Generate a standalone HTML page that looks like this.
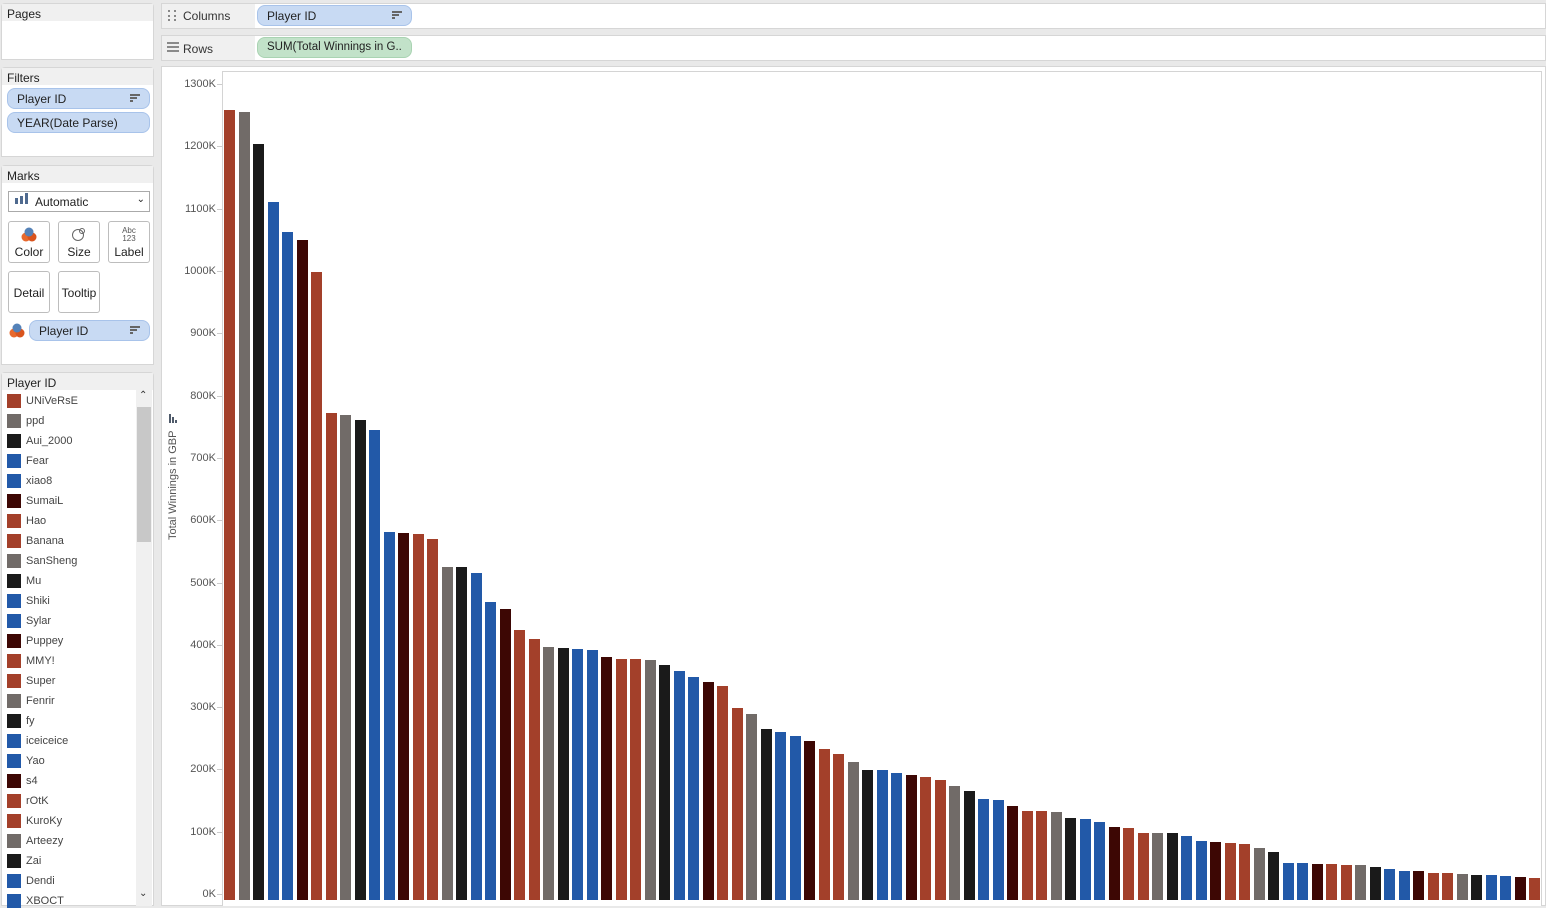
<!DOCTYPE html>
<html><head><meta charset="utf-8">
<style>
*{margin:0;padding:0;box-sizing:border-box}
body{width:1546px;height:906px;background:#e9e9e9;font-family:"Liberation Sans",Tahoma,sans-serif;font-size:12px;color:#333;position:relative;overflow:hidden}
.abs{position:absolute}
.card{position:absolute;background:#fff;border:1px solid #d6d6d6;border-radius:4px 4px 0 0}
.card .hd{background:#f0f0f0;height:17px;padding:3px 5px 0;font-size:12px;color:#222}
.pill{position:absolute;background:#c8daf3;border:1px solid #a8c3ea;border-radius:8px;height:21px;padding:3px 9px;font-size:12px;color:#222;white-space:nowrap;overflow:hidden}
.pill.g{background:#c2e2c9;border-color:#a9d3b2;font-size:11.5px}
.sorticon{position:absolute;right:9px;top:5px;width:10px;height:9px}
.sorticon i{display:block;height:2px;background:#666;margin-bottom:1px}
.btn{position:absolute;width:42px;height:42px;border:1px solid #bdbdbd;border-radius:3px;background:#fff;font-size:12px;text-align:center;color:#222}
.leg{position:absolute;left:5px;font-size:11px;color:#444}
.leg b{position:absolute;left:0;top:0;width:14px;height:14px}
.leg span{position:absolute;left:19px;top:1px;white-space:nowrap}
</style></head><body>
<div class="card" style="left:1px;top:3px;width:153px;height:57px"><div class="hd">Pages</div></div>
<div class="card" style="left:1px;top:67px;width:153px;height:90px"><div class="hd">Filters</div>
<div class="pill" style="left:5px;top:20px;width:143px">Player ID<div class="sorticon"><i style="width:10px"></i><i style="width:7px"></i><i style="width:3px"></i></div></div>
<div class="pill" style="left:5px;top:44px;width:143px">YEAR(Date Parse)</div>
</div>
<div class="card" style="left:1px;top:165px;width:153px;height:200px"><div class="hd">Marks</div>
<div class="abs" style="left:6px;top:25px;width:142px;height:21px;border:1px solid #aaa;background:#fff;padding:3px 0 0 26px;font-size:12px;color:#222">Automatic
<div class="abs" style="left:6px;top:6px;width:3px;height:6px;background:#4f6a8f"></div><div class="abs" style="left:11px;top:4px;width:3px;height:8px;background:#4f6a8f"></div><div class="abs" style="left:16px;top:1px;width:3px;height:11px;background:#4f6a8f"></div>
<div class="abs" style="right:4px;top:2px;font-size:10px">&#8964;</div></div>
<div class="btn" style="left:6px;top:55px"><svg width="18" height="16" style="margin-top:4px"><circle cx="6" cy="11" r="4.5" fill="#e8692d"/><circle cx="12" cy="11" r="4.5" fill="#d9541e"/><circle cx="9" cy="6" r="4.5" fill="#5582b8"/></svg><div>Color</div></div>
<div class="btn" style="left:56px;top:55px"><svg width="18" height="16" style="margin-top:4px"><circle cx="8" cy="9" r="5.5" fill="none" stroke="#666"/><circle cx="12" cy="5" r="2.5" fill="none" stroke="#666"/></svg><div>Size</div></div>
<div class="btn" style="left:106px;top:55px"><div style="font-size:8px;line-height:8px;margin-top:5px;color:#555">Abc<br>123</div><div style="margin-top:2px">Label</div></div>
<div class="btn" style="left:6px;top:105px;padding-top:14px">Detail</div>
<div class="btn" style="left:56px;top:105px;padding-top:14px">Tooltip</div>
<svg class="abs" style="left:6px;top:156px" width="18" height="16"><circle cx="6" cy="11" r="4.5" fill="#e8692d"/><circle cx="12" cy="11" r="4.5" fill="#d9541e"/><circle cx="9" cy="6" r="4.5" fill="#5582b8"/></svg>
<div class="pill" style="left:27px;top:154px;width:121px">Player ID<div class="sorticon"><i style="width:10px"></i><i style="width:7px"></i><i style="width:3px"></i></div></div>
</div>
<div class="card" style="left:1px;top:372px;width:153px;height:534px"><div class="hd">Player ID</div>
<div class="abs" style="left:134px;top:17px;width:16px;height:516px;background:#f0f0f0"><div class="abs" style="left:1px;top:17px;width:14px;height:135px;background:#c8c8c8"></div><div class="abs" style="left:3px;top:0;font-size:10px">&#8963;</div><div class="abs" style="left:3px;top:498px;font-size:10px">&#8964;</div></div>
<div id="leg"></div>
</div>
<div class="abs" style="left:161px;top:3px;width:1385px;height:26px;background:#fff;border:1px solid #d6d6d6"><div class="abs" style="left:0;top:0;width:93px;height:24px;background:#f0f0f0;padding:5px 0 0 21px;font-size:12px">Columns</div>
<div class="abs" style="left:6px;top:6px;height:11px;border-left:2px dotted #888;border-right:2px dotted #888;width:8px"></div></div>
<div class="pill" style="left:257px;top:5px;width:155px">Player ID<div class="sorticon"><i style="width:10px"></i><i style="width:7px"></i><i style="width:3px"></i></div></div>
<div class="abs" style="left:161px;top:35px;width:1385px;height:26px;background:#fff;border:1px solid #d6d6d6"><div class="abs" style="left:0;top:0;width:93px;height:24px;background:#f0f0f0;padding:6px 0 0 21px;font-size:12px">Rows</div>
<div class="abs" style="left:5px;top:6px;width:12px;height:11px;background:repeating-linear-gradient(#8a8a8a 0 2px,transparent 2px 4px)"></div></div>
<div class="pill g" style="left:257px;top:37px;width:155px">SUM(Total Winnings in G..</div>
<div class="abs" style="left:161px;top:66px;width:1385px;height:840px;background:#fff;border:1px solid #d6d6d6"></div>
<div class="abs" style="left:222px;top:71px;width:1320px;height:835px;border:1px solid #d4d4d4;border-bottom:none;background:#fff"></div>
<div class="abs" style="left:167px;top:540px;transform:rotate(-90deg);transform-origin:0 0;font-size:11px;color:#555;white-space:nowrap">Total Winnings in GBP</div>
<div class="abs" style="left:169px;top:414px;width:2px;height:9px;background:#4f5a6a"></div><div class="abs" style="left:172px;top:417px;width:2px;height:6px;background:#4f5a6a"></div><div class="abs" style="left:175px;top:420px;width:2px;height:3px;background:#4f5a6a"></div>
<div id="ax"></div>
<div id="bars"></div>
<script>
var C={r:"#a3402a",g:"#716b68",k:"#1a1a1a",b:"#2259a8",d:"#3d0704"};
var pat=["r","g","k","b","b","d","r"];
var tops=[110,112,144,202,232,240,272,413,415,420,430,532,533,534,539,567,567,573,602,609,630,639,647,648,649,650,657,659,659,660,665,671,677,682,686,708,714,729,732,736,741,749,754,762,770,770,773,775,777,780,786,791,799,800,806,811,811,812,818,819,822,827,828,833,833,833,836,841,842,843,844,848,852,863,863,864,864,865,865,867,869,871,871,873,873,874,875,875,876,877,878];
var h="";
for(var i=0;i<tops.length;i++){var x=224+i*14.5;h+='<div class="abs" style="left:'+x.toFixed(1)+'px;top:'+tops[i]+'px;width:11px;height:'+(900-tops[i])+'px;background:'+C[pat[i%7]]+'"></div>';}
document.getElementById("bars").innerHTML=h;
var a="";
for(var k=0;k<=13;k++){var y=893-k*62.3;a+='<div class="abs" style="left:168px;top:'+(y-5).toFixed(1)+'px;width:48px;text-align:right;font-size:11px;color:#555">'+(k*100)+'K</div><div class="abs" style="left:217px;top:'+(y+1).toFixed(1)+'px;width:5px;height:1px;background:#ccc"></div>';}
document.getElementById("ax").innerHTML=a;
var names=["UNiVeRsE","ppd","Aui_2000","Fear","xiao8","SumaiL","Hao","Banana","SanSheng","Mu","Shiki","Sylar","Puppey","MMY!","Super","Fenrir","fy","iceiceice","Yao","s4","rOtK","KuroKy","Arteezy","Zai","Dendi","XBOCT"];
var l="";
for(var j=0;j<names.length;j++){l+='<div class="leg" style="top:'+(21+j*20)+'px"><b style="background:'+C[pat[j%7]]+'"></b><span>'+names[j]+'</span></div>';}
document.getElementById("leg").innerHTML=l;
</script>
</body></html>
